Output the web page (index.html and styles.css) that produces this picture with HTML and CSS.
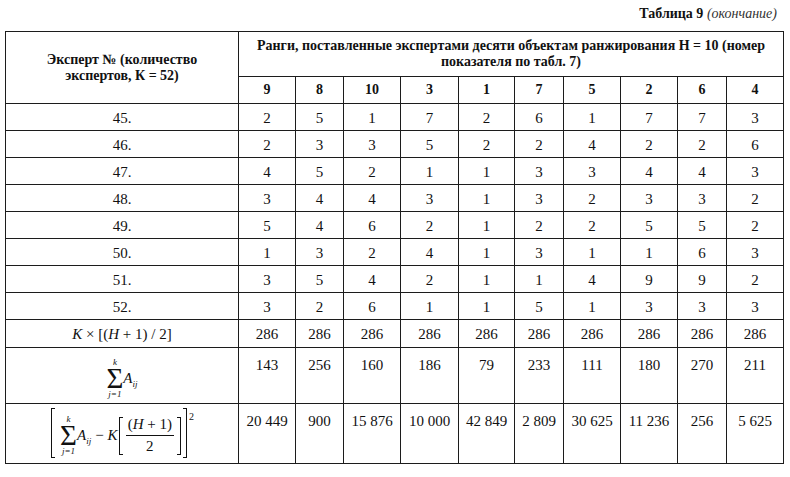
FILE: index.html
```html
<!DOCTYPE html>
<html lang="ru">
<head>
<meta charset="utf-8">
<link rel="stylesheet" href="styles.css">
</head>
<body>
<div class="page">
  <div class="caption"><b>Таблица 9</b> <i>(окончание)</i></div>
  <table class="tbl">
    <colgroup>
      <col class="c0"><col class="w57"><col class="w48"><col class="w57"><col class="w58"><col class="w56"><col class="w49"><col class="w57"><col class="w57"><col class="w49"><col class="w57">
    </colgroup>
    <thead>
      <tr class="h1">
        <th rowspan="2" class="expert">Эксперт № (количество<br>экспертов, К = 52)</th>
        <th colspan="10" class="ranks">Ранги, поставленные экспертами десяти объектам ранжирования Н = 10 (номер<br>показателя по табл. 7)</th>
      </tr>
      <tr class="h2">
        <th>9</th><th>8</th><th>10</th><th>3</th><th>1</th><th>7</th><th>5</th><th>2</th><th>6</th><th>4</th>
      </tr>
    </thead>
    <tbody>
      <tr class="r"><td>45.</td><td>2</td><td>5</td><td>1</td><td>7</td><td>2</td><td>6</td><td>1</td><td>7</td><td>7</td><td>3</td></tr>
      <tr class="r"><td>46.</td><td>2</td><td>3</td><td>3</td><td>5</td><td>2</td><td>2</td><td>4</td><td>2</td><td>2</td><td>6</td></tr>
      <tr class="r"><td>47.</td><td>4</td><td>5</td><td>2</td><td>1</td><td>1</td><td>3</td><td>3</td><td>4</td><td>4</td><td>3</td></tr>
      <tr class="r"><td>48.</td><td>3</td><td>4</td><td>4</td><td>3</td><td>1</td><td>3</td><td>2</td><td>3</td><td>3</td><td>2</td></tr>
      <tr class="r"><td>49.</td><td>5</td><td>4</td><td>6</td><td>2</td><td>1</td><td>2</td><td>2</td><td>5</td><td>5</td><td>2</td></tr>
      <tr class="r"><td>50.</td><td>1</td><td>3</td><td>2</td><td>4</td><td>1</td><td>3</td><td>1</td><td>1</td><td>6</td><td>3</td></tr>
      <tr class="r"><td>51.</td><td>3</td><td>5</td><td>4</td><td>2</td><td>1</td><td>1</td><td>4</td><td>9</td><td>9</td><td>2</td></tr>
      <tr class="r"><td>52.</td><td>3</td><td>2</td><td>6</td><td>1</td><td>1</td><td>5</td><td>1</td><td>3</td><td>3</td><td>3</td></tr>
      <tr class="r kr"><td><i>K</i> × [(<i>H</i> + 1) / 2]</td><td>286</td><td>286</td><td>286</td><td>286</td><td>286</td><td>286</td><td>286</td><td>286</td><td>286</td><td>286</td></tr>
      <tr class="sumrow">
        <td class="formula">
          <span class="expr">
            <span class="sum"><span class="lim">k</span><span class="sig">Σ</span><span class="lim">j=1</span></span><span class="var">A<span class="sub">ij</span></span>
          </span>
        </td>
        <td>143</td><td>256</td><td>160</td><td>186</td><td>79</td><td>233</td><td>111</td><td>180</td><td>270</td><td>211</td>
      </tr>
      <tr class="sqrow">
        <td class="formula">
          <span class="expr tall">
            <span class="lb big"></span>
            <span class="inner">
              <span class="sum"><span class="lim">k</span><span class="sig">Σ</span><span class="lim">j=1</span></span><span class="var">A<span class="sub">ij</span></span>
              <span class="op">−</span>
              <span class="var k">K</span>
              <span class="lb small"></span>
              <span class="frac"><span class="num">(<i>H</i> + 1)</span><span class="den">2</span></span>
              <span class="rb small"></span>
            </span>
            <span class="rb big"></span>
            <span class="pow">2</span>
          </span>
        </td>
        <td>20 449</td><td>900</td><td>15 876</td><td>10 000</td><td>42 849</td><td>2 809</td><td>30 625</td><td>11 236</td><td>256</td><td>5 625</td>
      </tr>
    </tbody>
  </table>
</div>
</body>
</html>
```
FILE: styles.css
```css
html, body {
  margin: 0;
  padding: 0;
  background: #fff;
}
body {
  font-family: "Liberation Serif", "Times New Roman", serif;
  color: #111;
}
.page {
  width: 790px;
  height: 477px;
  padding: 0 7px 0 5px;
  box-sizing: border-box;
  overflow: hidden;
}
.caption {
  height: 31px;
  box-sizing: border-box;
  padding: 5px 6px 0 0;
  text-align: right;
  font-size: 14px;
  line-height: 18px;
}
.caption i { color: #333; }
.tbl {
  width: 778px;
  border-collapse: collapse;
  table-layout: fixed;
  font-size: 15px;
}
.c0 { width: 233px; }
.w57 { width: 57px; }
.w48 { width: 48px; }
.w58 { width: 58px; }
.w56 { width: 56px; }
.w49 { width: 49px; }
.tbl th, .tbl td {
  border: 1px solid #1c1c1c;
  padding: 0;
  text-align: center;
  vertical-align: middle;
  line-height: 16px;
}
.tbl th {
  font-weight: bold;
  font-size: 14px;
}
.h1 { height: 45px; }
.h1 th.ranks { padding-bottom: 1px; }
.h2 { height: 27px; }
.r { height: 27px; }
.r td { padding-top: 1px; }
.kr { height: 28px; }
.sumrow { height: 56px; }
.sqrow { height: 60px; }
.sumrow td, .sqrow td {
  vertical-align: top;
  padding-top: 9px;
}
.tbl td.formula {
  vertical-align: middle;
  padding: 0;
}
.expr {
  display: inline-flex;
  align-items: center;
  font-size: 15px;
  line-height: 1;
}
.expr.tall {
  height: 50px;
  margin-top: 1px;
  margin-left: 1px;
}
.inner {
  display: inline-flex;
  align-items: center;
  align-self: stretch;
  padding-top: 6px;
}
.sum {
  display: inline-flex;
  flex-direction: column;
  align-items: center;
}
.lim {
  font-size: 9px;
  font-style: italic;
  line-height: 9px;
}
.sig {
  font-size: 29px;
  line-height: 22px;
  height: 22px;
  margin: 0 0 1px;
}
.var {
  font-style: italic;
  margin-left: 0;
}
.sub {
  font-size: 9px;
  position: relative;
  top: 4px;
}
.op { margin: 0 4px 0 4px; }
.var.k { margin-right: 0; }
.lb, .rb {
  align-self: stretch;
  border-top: 1px solid #111;
  border-bottom: 1px solid #111;
  width: 3px;
}
.lb { border-left: 1px solid #111; }
.rb { border-right: 1px solid #111; }
.lb.big { margin-right: 5px; }
.rb.big { margin-left: 2px; }
.lb.small { margin: 3px 3px 3px 1px; }
.rb.small { margin: 3px 0 3px 3px; }
.frac {
  display: inline-flex;
  flex-direction: column;
  align-items: center;
}
.frac .num {
  padding: 0 2px 3px;
  border-bottom: 1px solid #111;
}
.frac .den { padding-top: 3px; }
.pow {
  font-size: 10px;
  align-self: flex-start;
  margin-left: 2px;
  margin-top: 4px;
}
```
